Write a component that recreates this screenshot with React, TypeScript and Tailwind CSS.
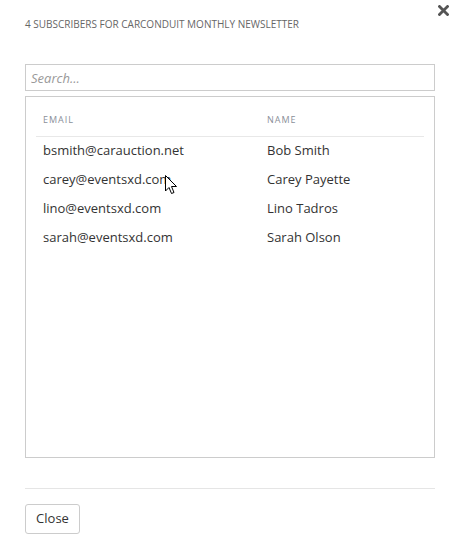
const rows = [
  { email: "bsmith@carauction.net", name: "Bob Smith" },
  { email: "carey@eventsxd.com", name: "Carey Payette" },
  { email: "lino@eventsxd.com", name: "Lino Tadros" },
  { email: "sarah@eventsxd.com", name: "Sarah Olson" },
];

export default function App() {
  return (
    <div className="relative w-[457px] h-[540px] bg-white px-[25px] font-['Open_Sans',sans-serif]">
      <button className="absolute right-[8px] top-[5px] text-[#555]">
        <svg width="11" height="11" viewBox="0 0 11 11">
          <path d="M1.5 1.5 L9.5 9.5 M9.5 1.5 L1.5 9.5" stroke="#555" strokeWidth="2.8" strokeLinecap="square" />
        </svg>
      </button>

      <h4 className="pt-[17px] text-[10px] leading-[14px] text-[#666] uppercase">
        4 Subscribers for CarConduit Monthly Newsletter
      </h4>

      <input
        placeholder="Search..."
        className="mt-[33px] block w-[410px] h-[27px] border border-[#ccc] px-[5px] text-[13px] text-[#333] placeholder:italic placeholder:text-[#999] outline-none"
      />

      <div className="mt-[5px] w-[410px] h-[362px] border border-[#ccc] px-[10px]">
        <table className="w-full border-collapse">
          <thead>
            <tr className="border-b border-[#e8e8e8]">
              <th className="h-[39px] pt-[6px] pl-[7px] text-left text-[9px] font-normal tracking-[1px] text-[#8a8f99] w-[231px]">
                EMAIL
              </th>
              <th className="h-[39px] pt-[6px] text-left text-[9px] font-normal tracking-[1px] text-[#8a8f99]">
                NAME
              </th>
            </tr>
          </thead>
          <tbody>
            {rows.map((r) => (
              <tr key={r.email}>
                <td className="h-[29px] pl-[7px] text-[13px] text-[#333]">{r.email}</td>
                <td className="h-[29px] text-[13px] text-[#333]">{r.name}</td>
              </tr>
            ))}
          </tbody>
        </table>
      </div>

      <div className="mt-[30px] w-[410px] border-t border-[#e5e5e5]" />

      <button className="mt-[15px] w-[55px] h-[30px] border border-[#ccc] rounded-[3px] text-[13px] text-[#333] bg-white">
        Close
      </button>

      <svg className="absolute left-[165px] top-[175px]" width="13" height="20" viewBox="0 0 13 20">
        <path d="M0.5 0.5 L0.5 16 L4 12.5 L6.5 18.5 L9 17.5 L6.5 11.5 L11.5 11.5 Z" fill="white" stroke="#000" strokeWidth="1" strokeLinejoin="miter" />
      </svg>
    </div>
  );
}
